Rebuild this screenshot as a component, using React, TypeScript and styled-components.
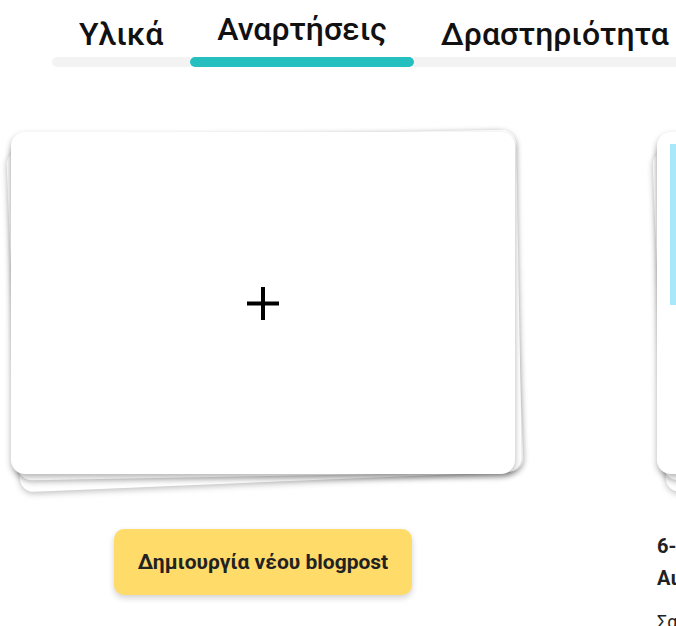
import React from 'react'
import styled, { createGlobalStyle } from 'styled-components'

const teal = '#26bfbf'
const track = '#f3f3f3'

const GlobalStyle = createGlobalStyle`
  html, body {
    margin: 0;
    background: #fff;
    overflow: hidden;
  }
  body {
    font-family: Roboto, "Noto Sans", sans-serif;
    color: #111;
  }
`

const tabs = [
  { label: 'Υλικά' },
  { label: 'Αναρτήσεις', active: true },
  { label: 'Δραστηριότητα' },
]

export default function App() {
  return (
    <Page>
      <GlobalStyle />
      <TabStrip>
        {tabs.map(t => (
          <Tab key={t.label}>
            <TabLabel $active={!!t.active}>{t.label}</TabLabel>
            <TabBar $active={!!t.active} />
          </Tab>
        ))}
        <TabFill>
          <TabBar $active={false} />
        </TabFill>
      </TabStrip>

      <Columns>
        <Column>
          <Stack>
            <BackCard $angle={-2.4} $dx={2} $dy={8} />
            <BackCard $angle={-1} $dx={4} $dy={2} />
            <FrontCard $center>
              <PlusIcon viewBox="0 0 32 33">
                <path d="M16 0v33M0 16.5h32" stroke="#000" strokeWidth="4" />
              </PlusIcon>
            </FrontCard>
          </Stack>
          <CreateButton>Δημιουργία νέου blogpost</CreateButton>
        </Column>

        <Column $left>
          <Stack>
            <BackCard $angle={-2.4} $dx={2} $dy={8} />
            <BackCard $angle={-1} $dx={4} $dy={2} />
            <FrontCard>
              <Cover />
            </FrontCard>
          </Stack>
          <PostTitle>6-7 Ιουνίου: Διαδικτυακό σεμινάριο<br />Αιολική ενέργεια και περιβάλλον</PostTitle>
          <PostExcerpt>Σας προσκαλούμε να συμμετάσχετε στη νέα μας δράση</PostExcerpt>
        </Column>
      </Columns>
    </Page>
  )
}

const Page = styled.div`
  width: 676px;
  height: 626px;
  overflow: hidden;
`

const TabStrip = styled.div`
  display: flex;
  align-items: flex-end;
  margin-left: 52px;
  padding-top: 11px;
  width: 800px;

  > div:first-child > div:last-child {
    border-radius: 5px 0 0 5px;
  }
`

const Tab = styled.div`
  display: flex;
  flex-direction: column;
  align-items: center;
`

const TabFill = styled.div`
  flex: 1;
  display: flex;
  flex-direction: column;
`

const TabLabel = styled.div<{ $active: boolean }>`
  font-size: 32px;
  font-weight: 500;
  line-height: 36px;
  padding: 0 27px;
  margin-bottom: ${p => (p.$active ? '10px' : '5px')};
  color: #111;
  white-space: nowrap;
`

const TabBar = styled.div<{ $active: boolean }>`
  align-self: stretch;
  height: 10px;
  background: ${p => (p.$active ? teal : track)};
  border-radius: ${p => (p.$active ? '6px' : '0')};
`

const Columns = styled.div`
  display: flex;
  gap: 142px;
  padding: 65px 0 0 11px;
`

const Column = styled.div<{ $left?: boolean }>`
  flex: 0 0 504px;
  display: flex;
  flex-direction: column;
  align-items: ${p => (p.$left ? 'flex-start' : 'center')};
`

const Stack = styled.div`
  position: relative;
  width: 504px;
  height: 342px;
`

const BackCard = styled.div<{ $angle: number; $dx: number; $dy: number }>`
  position: absolute;
  inset: 0;
  background: #fff;
  border-radius: 14px;
  box-shadow: 0 2px 6px rgba(0, 0, 0, 0.25);
  transform: translate(${p => p.$dx}px, ${p => p.$dy}px) rotate(${p => p.$angle}deg);
`

const FrontCard = styled.div<{ $center?: boolean }>`
  position: relative;
  box-sizing: border-box;
  height: 100%;
  background: #fff;
  border-radius: 14px;
  box-shadow: 0 3px 6px rgba(0, 0, 0, 0.3);
  padding: 12px 13px;
  display: flex;
  align-items: ${p => (p.$center ? 'center' : 'flex-start')};
  justify-content: center;
`

const PlusIcon = styled.svg`
  width: 32px;
  height: 33px;
`

const Cover = styled.div`
  width: 100%;
  height: 161px;
  background: #a9e8fa;
`

const CreateButton = styled.button`
  margin-top: 55px;
  width: 298px;
  height: 66px;
  border: none;
  border-radius: 10px;
  background: #ffdc6a;
  box-shadow: 0 3px 6px rgba(0, 0, 0, 0.18);
  font-family: Roboto, sans-serif;
  font-weight: 700;
  font-size: 21px;
  color: #222;
`

const PostTitle = styled.div`
  margin-top: 56px;
  font-size: 20px;
  font-weight: 700;
  line-height: 32px;
  color: #222;
  white-space: nowrap;
`

const PostExcerpt = styled.div`
  margin-top: 14px;
  font-size: 18px;
  line-height: 28px;
  color: #222;
  white-space: nowrap;
`
